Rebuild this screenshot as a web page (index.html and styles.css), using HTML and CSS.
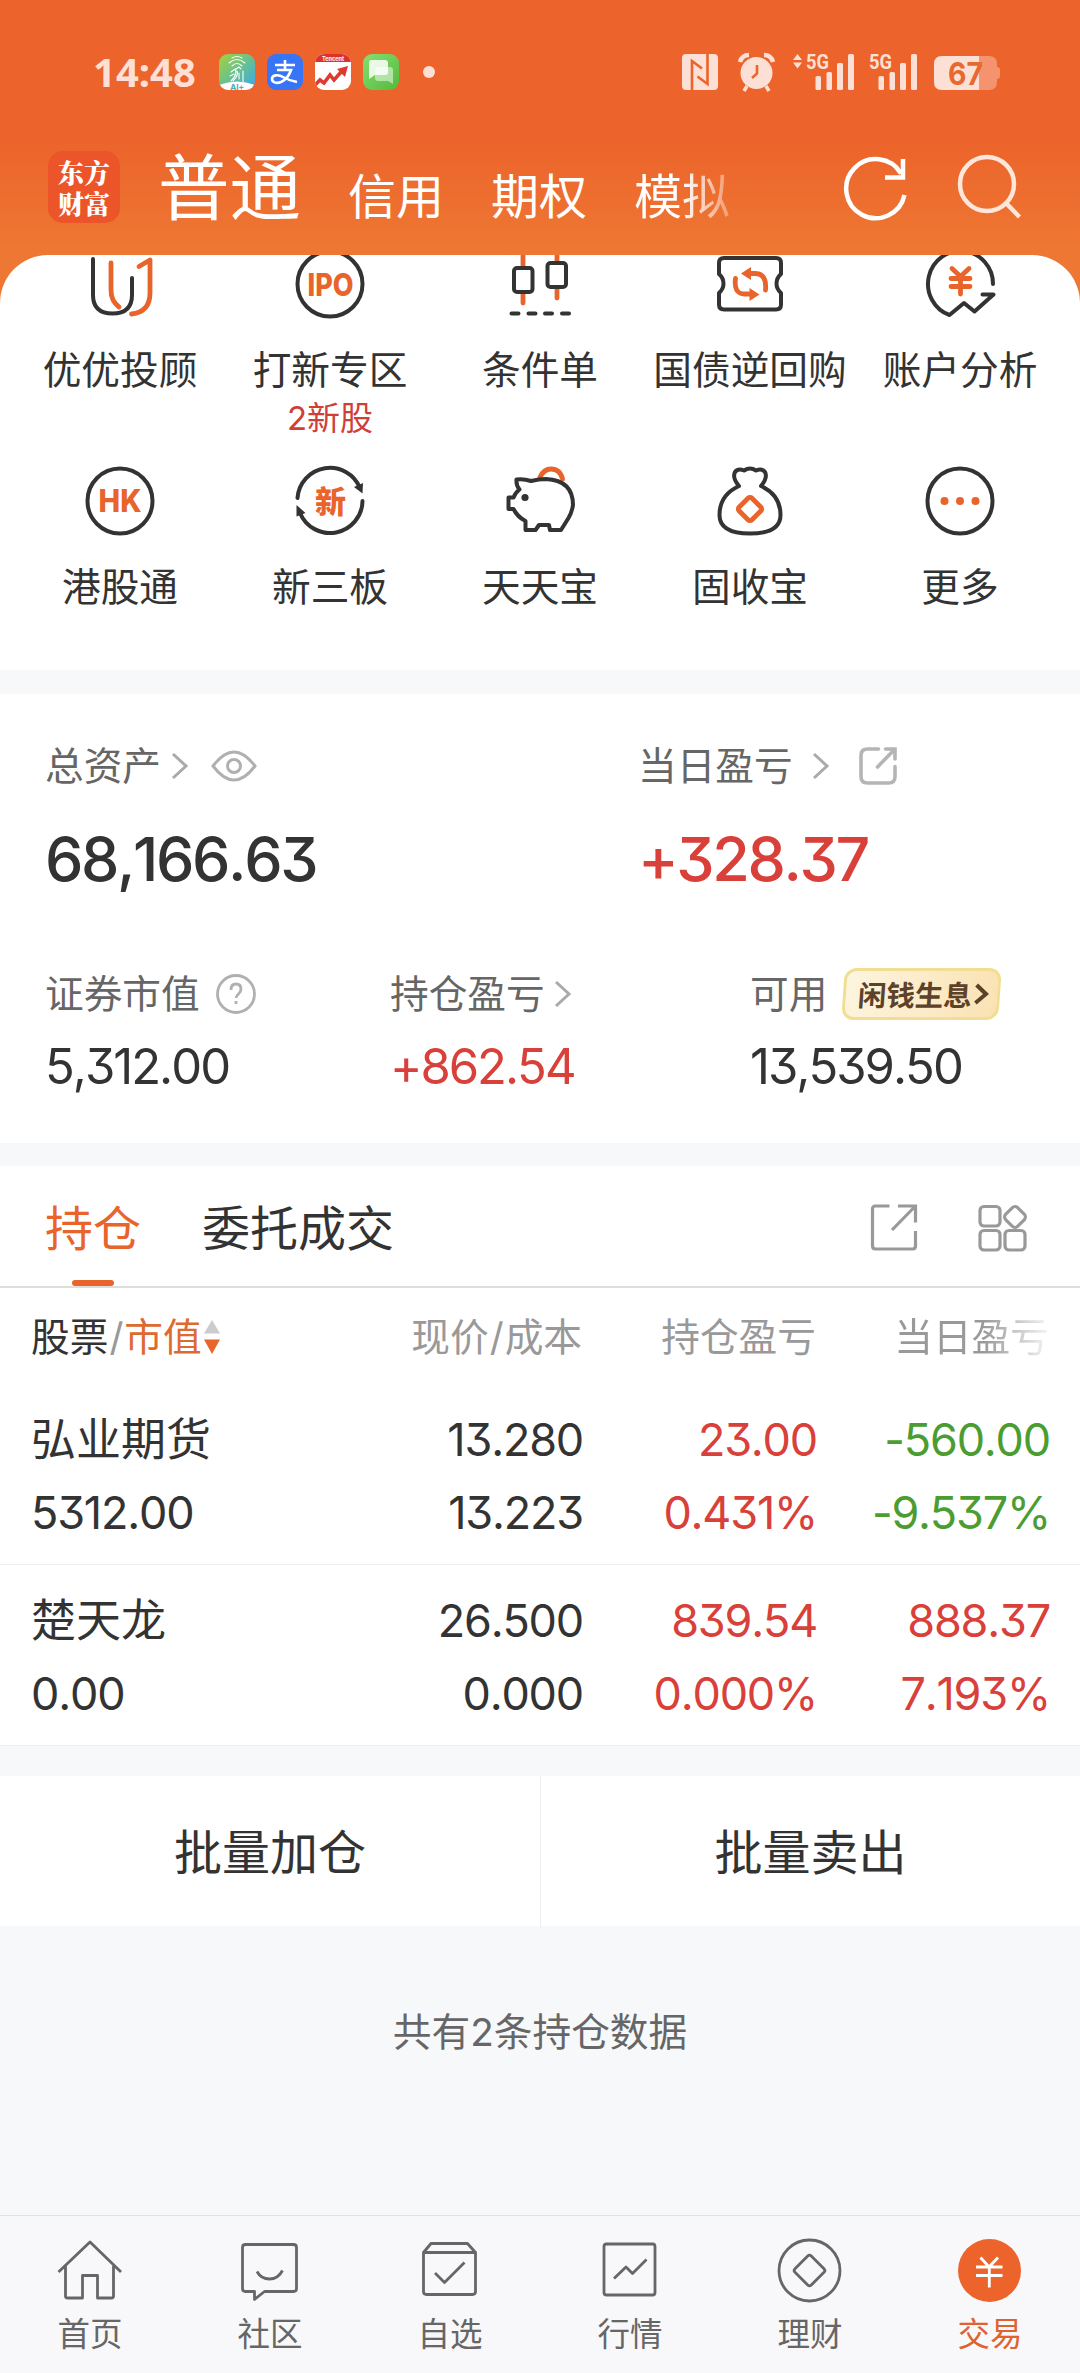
FILE: index.html
```html
<!DOCTYPE html>
<html lang="zh-CN">
<head>
<meta charset="utf-8">
<title>交易</title>
<link rel="stylesheet" href="styles.css">
</head>
<body>
<div class="screen">
  <header class="top">
    <div class="status">
      <span class="clock">14:48</span>
      <svg class="apps" width="240" height="48" viewBox="213 48 240 48">
        <defs>
          <linearGradient id="ga" x1="0" y1="0" x2="1" y2="1"><stop offset="0" stop-color="#a8d13a"/><stop offset=".5" stop-color="#66c191"/><stop offset="1" stop-color="#3fa5ef"/></linearGradient>
          <linearGradient id="gb" x1="0" y1="0" x2="1" y2="1"><stop offset="0" stop-color="#86e070"/><stop offset="1" stop-color="#55b83c"/></linearGradient>
          <clipPath id="ca"><rect x="219" y="54" width="36" height="36" rx="9"/></clipPath>
          <clipPath id="cc"><rect x="315" y="54" width="36" height="36" rx="9"/></clipPath>
        </defs>
        <g clip-path="url(#ca)">
          <rect x="219" y="54" width="36" height="36" fill="url(#ga)"/>
          <path d="M219 85q18-7 36 0v6h-36z" fill="#fff"/>
          <g fill="none" stroke="#fff" stroke-width="1.1" stroke-linecap="round"><path d="M232 58q5-3 10 0M229 63q8-7 16 0M232 66q5-5 10 0M236 69l3-2 2 2M231 72l4-3q3 5-4 12M237 71q2 4-4 10M239 73v6M243 71v11M230 76l4-2"/></g>
          <text x="237" y="90" class="tiny-ai">AI+</text>
        </g>
        <rect x="267" y="54" width="36" height="36" rx="9" fill="#3874f6"/>
        <path d="M275 65h20M285 60v10M277 70h14q-3 9-10 12c-5 2-9 0-9-3 0-4 6-5 11-2q7 4 14 5" fill="none" stroke="#fff" stroke-width="2.6"/>
        <g clip-path="url(#cc)">
          <rect x="315" y="54" width="36" height="36" fill="#fff"/>
          <rect x="315" y="54" width="36" height="8" fill="#e03128"/>
          <text x="333" y="60.500" class="tiny-t">Tencent</text>
          <path d="M314 86l6-6 4 3 6-8 4 5 8-9" fill="none" stroke="#de3a2f" stroke-width="3.600"/>
          <path d="M337 69l11-3-3 11z" fill="#de3a2f"/>
        </g>
        <rect x="363" y="54" width="36" height="36" rx="9" fill="url(#gb)"/>
        <path d="M376 67h14q3 0 3 3v14l-5-3h-10q-3 0-3-3v-8z" fill="#fff" opacity=".5"/>
        <path d="M371 60h14q3 0 3 3v9q0 3-3 3h-10l-6 4v-16q0-3 2-3z" fill="#fff" opacity=".85"/>
        <circle cx="429" cy="72" r="6" fill="#fde0d5"/>
      </svg>
      <svg class="signals" width="330" height="48" viewBox="676 48 330 48" fill="#fde0d5">
        <rect x="682" y="54" width="36" height="36" rx="4"/>
        <path d="M692 90V61l10 7.500M707.500 54v30l-10-7.500" fill="none" stroke="#ec632b" stroke-width="2.600"/>
        <circle cx="756.500" cy="73" r="16"/>
        <path d="M740 62q2-7 9-7M773 62q-2-7-9-7" fill="none" stroke="#fde0d5" stroke-width="4.500"/>
        <path d="M747 86l-3 5M766 86l3 5" stroke="#fde0d5" stroke-width="3.500"/>
        <path d="M757 65v8.500l-5 4.500" fill="none" stroke="#ec632b" stroke-width="2.600"/>
        <path d="M793 60l4.500-6 4.500 6zM793 62.500h9l-4.500 6z"/>
        <text x="806" y="69" class="net" textLength="23" lengthAdjust="spacingAndGlyphs">5G</text>
        <rect x="815.500" y="76" width="5.500" height="14" rx="1.500"/><rect x="826.500" y="72" width="5.500" height="18" rx="1.500"/><rect x="837" y="63" width="6" height="27" rx="1.500"/><rect x="848" y="54" width="6" height="36" rx="1.500"/>
        <text x="869" y="69" class="net" textLength="23" lengthAdjust="spacingAndGlyphs">5G</text>
        <rect x="878.500" y="76" width="5.500" height="14" rx="1.500"/><rect x="889.500" y="72" width="5.500" height="18" rx="1.500"/><rect x="900" y="63" width="6" height="27" rx="1.500"/><rect x="911" y="54" width="6" height="36" rx="1.500"/>
        <path d="M979 56h10q8 0 8 8v3q3 0 3 3v6q0 3-3 3v3q0 8-8 8h-10z" fill="#f4936e"/>
        <path d="M979 56h-37q-8 0-8 8v18q0 8 8 8h37z"/>
        <text x="948" y="84.500" class="batt" textLength="35" lengthAdjust="spacingAndGlyphs">67</text>
      </svg>
    </div>
    <div class="titlebar">
      <div class="logo"><span>东方</span><span>财富</span></div>
      <nav class="modes">
        <span class="mode on">普通</span><span class="mode">信用</span><span class="mode">期权</span><span class="mode fade">模拟</span>
      </nav>
      <svg class="head-icons" width="186" height="72" viewBox="840 151 186 72" fill="none" stroke="#fff">
        <path d="M904.500 195A29.500 29.500 0 1 1 901 173.500" stroke-width="4.500"/>
        <path d="M903 159v18.500h-18" stroke-width="4.500"/>
        <g stroke="#fee6da" stroke-width="4.500"><circle cx="987" cy="184" r="27"/><path d="M1006 203l13.500 14"/></g>
      </svg>
    </div>
  </header>

  <main>
    <section class="shortcuts">
      <div class="cell">
        <svg width="72" height="72" viewBox="84 248 72 72" class="ic"><path d="M93 259v36q0 18.500 19.500 18.500T132 295v-17"/><path class="o" d="M111 263v27q0 11 8 17M139 266.500l11-6.500v33q0 19-18.500 21"/></svg>
        <span>优优投顾</span>
      </div>
      <div class="cell">
        <svg width="72" height="72" viewBox="294 248 72 72" class="ic"><circle cx="330" cy="284" r="32.500"/><text class="badge-t" x="307.500" y="295.500" textLength="46" lengthAdjust="spacingAndGlyphs">IPO</text></svg>
        <span>打新专区</span><small>2新股</small>
      </div>
      <div class="cell">
        <svg width="72" height="72" viewBox="504 248 72 72" class="ic"><path class="o" d="M523 256v11M523 294v9M557 252v10M557 289v9"/><rect x="514" y="268" width="18.500" height="24" rx="3"/><rect x="547.500" y="263" width="18.500" height="24" rx="3"/><path d="M511.500 313.500h7M528.500 313.500h7M545 313.500h7M562 313.500h7"/></svg>
        <span>条件单</span>
      </div>
      <div class="cell">
        <svg width="72" height="72" viewBox="714 248 72 72" class="ic"><path d="M724 258h52q5 0 5 5v11q-4.500 4-4.500 9.500t4.500 9.500v11.500q0 5-5 5h-52q-5 0-5-5V293q4.500-4 4.500-9.500T719 274v-11q0-5 5-5z"/><g class="o"><path d="M749 273.500h6q12 0 10.500 16.500M735.500 278.500q-2 15.500 9 15.500h6"/></g><path class="of" d="M741 273.500l10-6.500v13zM759.500 294.500l-10-6.500v13z"/></svg>
        <span>国债逆回购</span>
      </div>
      <div class="cell">
        <svg width="72" height="72" viewBox="924 248 72 72" class="ic"><path d="M993 284A32.500 33 0 1 0 949.500 315l14.500-12 10.500 8.500 19-17h-11"/><path class="o" d="M952 268.500l8.500 8 8.500-8M951 278.500h19M951 286.500h19M960.500 277v17"/></svg>
        <span>账户分析</span>
      </div>
      <div class="cell">
        <svg width="72" height="72" viewBox="84 465 72 72" class="ic"><circle cx="120" cy="501" r="32.500"/><text class="badge-t" x="98.500" y="512" textLength="43" lengthAdjust="spacingAndGlyphs">HK</text></svg>
        <span>港股通</span>
      </div>
      <div class="cell">
        <svg width="72" height="72" viewBox="294 465 72 72" class="ic"><path d="M297.500 498A32.500 32.500 0 0 1 360 488M362.500 501A32.500 32.500 0 0 1 300 513"/><path class="kf" d="M354 487l9-4-.5 10.500zM296.500 505l9 8-9 3.500z"/><text class="xin" x="315" y="512.500">新</text></svg>
        <span>新三板</span>
      </div>
      <div class="cell">
        <svg width="72" height="72" viewBox="504 465 72 72" class="ic"><path class="o" d="M540 477q4-8 11-8 9 0 11.500 10"/><path d="M516.500 479.500q7-1 14.500 1.500 8-2 15-2 27 1.500 27 26-1 7-4.500 13l-7.500 12h-11l-1-5h-10l-3.500 5h-10v-9q-8-4-12-12h-5v-11.500h5q1.500-4.500 6-8-3.500-4-3-10z"/><circle class="kf" cx="525" cy="497.500" r="3.600"/></svg>
        <span>天天宝</span>
      </div>
      <div class="cell">
        <svg width="72" height="72" viewBox="714 465 72 72" class="ic"><path d="M739 486q-7-8-4-14 3-4 9-1.500 6-4 12 0 6-2.500 9 1.500 3 6-4 14 19.500 9 19.500 29 0 18.500-30.500 18.500T719.500 515q0-20 19.500-29z"/><rect class="ob" x="741" y="500" width="18" height="18" rx="2.500" transform="rotate(45 750 509)"/></svg>
        <span>固收宝</span>
      </div>
      <div class="cell">
        <svg width="72" height="72" viewBox="924 465 72 72" class="ic"><circle cx="960" cy="501" r="32.500"/><g class="of"><circle cx="944.500" cy="501" r="4"/><circle cx="960" cy="501" r="4"/><circle cx="975.500" cy="501" r="4"/></g></svg>
        <span>更多</span>
      </div>
    </section>

    <section class="assets">
      <div class="lead">
        <div class="stat">
          <div class="label">总资产<svg class="chev c1" width="20" height="30" viewBox="0 0 20 30"><path d="M3 3l13 12L3 27"/></svg>
            <svg class="eye" width="48" height="36" viewBox="0 0 48 36"><path d="M3 18Q24-10 45 18 24 46 3 18z"/><circle cx="24" cy="18" r="6.500"/></svg></div>
          <div class="big">68,166.63</div>
        </div>
        <div class="stat">
          <div class="label">当日盈亏<svg class="chev c2" width="20" height="30" viewBox="0 0 20 30"><path d="M3 3l13 12L3 27"/></svg>
            <svg class="ext" width="40" height="40" viewBox="858.500 745.500 40 40"><path d="M879 748.500h-11q-6.500 0-6.500 6.500v21q0 6.500 6.500 6.500h21q6.500 0 6.500-6.500v-10M886 748.500h9.500v10M895 749l-17 17.500"/></svg></div>
          <div class="big up">+328.37</div>
        </div>
      </div>
      <div class="minor">
        <div class="stat"><div class="label">证券市值<svg class="help" width="42" height="42" viewBox="0 0 42 42"><circle cx="21" cy="21" r="18.500"/><path d="M16 17q0-6 5-6t5 5q0 3-2.500 5T21 25M21 28v3"/></svg></div><div class="mid">5,312.00</div></div>
        <div class="stat"><div class="label">持仓盈亏<svg class="chev c3" width="20" height="30" viewBox="0 0 20 30"><path d="M3 3l13 12L3 27"/></svg></div><div class="mid up">+862.54</div></div>
        <div class="stat"><div class="label">可用<span class="promo"><b>闲钱生息</b><svg width="16" height="24" viewBox="0 0 16 24"><path d="M2 3l10 9L2 21"/></svg></span></div><div class="mid">13,539.50</div></div>
      </div>
    </section>

    <section class="holdings">
      <div class="tabs">
        <span class="tab on">持仓</span><span class="tab">委托成交</span>
        <svg class="tools" width="160" height="54" viewBox="869 1200 160 54"><path d="M889.500 1206h-14q-3 0-3 3v37q0 3 3 3h37q3 0 3-3v-15M898 1206h17.500v16.500M915 1206.500l-23 23.500"/><rect x="980" y="1206.500" width="20" height="19.500" rx="4"/><rect x="980" y="1230.500" width="20" height="19.500" rx="4"/><rect x="1005" y="1230.500" width="20" height="19.500" rx="4"/><rect x="1006.500" y="1208.500" width="17" height="17" rx="4" transform="rotate(45 1015 1217)"/></svg>
      </div>
      <div class="row thead">
        <div class="first"><em>股票</em><u>/</u><i>市值</i><svg width="18" height="36" viewBox="0 0 18 36"><path d="M1 14.500L9 1l8 13.500z" fill="#ccc"/><path d="M1 20.500h16L9 35z" fill="#e8642b"/></svg></div>
        <div>现价<u>/</u>成本</div><div>持仓盈亏</div><div class="tail">当日盈亏</div>
      </div>
      <div class="row">
        <div class="first"><p class="name">弘业期货</p><p>5312.00</p></div>
        <div><p>13.280</p><p>13.223</p></div>
        <div class="up"><p>23.00</p><p>0.431%</p></div>
        <div class="down"><p>-560.00</p><p>-9.537%</p></div>
      </div>
      <div class="row last">
        <div class="first"><p class="name">楚天龙</p><p>0.00</p></div>
        <div><p>26.500</p><p>0.000</p></div>
        <div class="up"><p>839.54</p><p>0.000%</p></div>
        <div class="up"><p>888.37</p><p>7.193%</p></div>
      </div>
    </section>

    <section class="actions"><span>批量加仓</span><span>批量卖出</span></section>
    <p class="note">共有2条持仓数据</p>
  </main>

  <nav class="bottom">
    <div class="item"><svg width="72" height="72" viewBox="54 2234 72 72"><path d="M58.500 2272l31.500-30 31 30M65.500 2266v30q0 2 2 2h15v-22.500h15V2298h14q2 0 2-2v-30"/></svg><span>首页</span></div>
    <div class="item"><svg width="72" height="72" viewBox="234 2234 72 72"><path d="M245.500 2244.500h48q3 0 3 3v41q0 3-3 3h-29l-10 8v-8h-9q-3 0-3-3v-41q0-3 3-3zM257 2271.500q4 7.500 12.500 7.500t13-8.500"/></svg><span>社区</span></div>
    <div class="item"><svg width="72" height="72" viewBox="414 2234 72 72"><path d="M423.500 2252.500h52v39q0 3-3 3h-46q-3 0-3-3zl7.500-9h36.500l8 9M435 2273l9.500 9.500 20-20"/></svg><span>自选</span></div>
    <div class="item"><svg width="72" height="72" viewBox="594 2234 72 72"><rect x="604" y="2244" width="51" height="51" rx="2.500"/><path d="M614 2278.500l12-11.500 6.500 6.500 14-14"/></svg><span>行情</span></div>
    <div class="item"><svg width="72" height="72" viewBox="774 2234 72 72"><circle cx="809.500" cy="2270.500" r="30.500"/><rect x="798" y="2259" width="23" height="23" rx="2.500" transform="rotate(45 809.500 2270.500)"/></svg><span>理财</span></div>
    <div class="item on"><svg width="72" height="72" viewBox="954 2234 72 72"><circle class="disc" cx="989.500" cy="2270.500" r="31.500"/><path class="yen" d="M980.500 2257.500l8.500 9.500 9-9.500M976 2267h26.500M976 2275.500h26.500M989.300 2267v20.500"/></svg><span>交易</span></div>
  </nav>
</div>
</body>
</html>
```

FILE: styles.css
```css
* { box-sizing: border-box; margin: 0; padding: 0; }
body {
  width: 1080px;
  background: #f7f8fa;
  color: #333;
  font-family: Inter, "Noto Sans CJK SC", sans-serif;
  font-feature-settings: "cv09";
}
svg { display: block; flex: none; }
.screen { display: flex; flex-direction: column; width: 1080px; height: 2373px; overflow: hidden; }

/* header */
.top { height: 305px; flex: none; background: linear-gradient(#ec632b 0, #ec632b 135px, #ee7833 255px); }
.status { display: flex; align-items: center; height: 96px; padding: 48px 74px 0 93px; }
.clock { width: 120px; font: 700 40px/48px "Noto Sans", sans-serif; color: #fde0d5; }
.signals { margin-left: auto; }
.tiny-ai { font: 700 8px Inter, sans-serif; fill: #47a9bd; text-anchor: middle; }
.tiny-t { font: 700 5.5px Inter, sans-serif; fill: #fff; text-anchor: middle; }
.net { font: 700 21px Roboto, sans-serif; }
.batt { font: 700 31px Inter, sans-serif; fill: #e8692f; }
.titlebar { display: flex; align-items: center; height: 145px; padding: 46px 54px 9px 48px; }
.logo {
  display: flex; flex-direction: column; align-items: center; justify-content: center;
  width: 72px; height: 72px; border-radius: 15px; background: #ec5429;
}
.logo span { color: #fff; font: 900 26px/31px "Noto Serif CJK SC", "Noto Sans CJK SC", serif; }
.modes { display: flex; align-items: baseline; gap: 47px; margin: 11px 0 0 38px; color: #fff; line-height: 72px; }
.mode { font-size: 48px; }
.mode.on { font-size: 71.5px; }
.mode.fade {
  background: linear-gradient(90deg, #fff 50%, rgba(255, 255, 255, .3));
  -webkit-background-clip: text; background-clip: text; color: transparent;
}
.head-icons { margin-left: auto; }

/* shortcuts */
main { flex: 1; margin-top: -50px; }
.shortcuts {
  display: grid; grid-template-columns: repeat(5, 210px); grid-template-rows: 217px 198px;
  height: 415px; padding: 0 15px; overflow: hidden;
  background: #fff; border-radius: 48px 48px 0 0;
}
.cell { display: flex; flex-direction: column; align-items: center; margin-top: -7px; font-size: 38.7px; line-height: 50px; }
.cell span { margin-top: 25px; }
.cell small { font-size: 33px; line-height: 46px; color: #cf3f38; }
.ic { fill: none; stroke: #333; stroke-width: 4; stroke-linecap: round; stroke-linejoin: round; }
.ic .o, .ic .ob { stroke: #e8642b; stroke-width: 4.8; }
.ic .of { fill: #e8642b; stroke: none; }
.ic .kf { fill: #333; stroke: none; }
.ic text { fill: #e8642b; stroke: none; }
.ic .badge-t { font: 800 31px Inter, sans-serif; }
.ic .xin { font: 900 31px "Noto Sans CJK SC", sans-serif; }

/* assets */
.assets { height: 449px; margin-top: 24px; padding: 47px 45px 0; background: #fff; }
.lead { display: grid; grid-template-columns: 593px 1fr; }
.minor { display: grid; grid-template-columns: 345px 360px 1fr; margin-top: 74px; }
.label { display: flex; align-items: center; height: 50px; font-size: 38.7px; line-height: 50px; color: #666; }
.chev { fill: none; stroke: #aaa; stroke-width: 3; }
.c1 { margin-left: 9px; }
.c2 { margin-left: 18px; }
.c3 { margin-left: 8px; }
.eye { margin-left: 20px; fill: none; stroke: #b0b0b0; stroke-width: 3; }
.ext { margin-left: 27px; fill: none; stroke: #b5b5b5; stroke-width: 3.6; stroke-linecap: round; }
.help { margin-left: 15px; fill: none; stroke: #b0b0b0; stroke-width: 2.8; }
.big, .mid, .row p { font-kerning: none; }
.big { height: 72px; margin-top: 32px; font-size: 61px; line-height: 72px; font-weight: 500; letter-spacing: -2.4px; }
.mid { height: 60px; margin-top: 18px; font-size: 49px; line-height: 60px; letter-spacing: -2px; }
.up { color: #d9403a; }
.down { color: #4b9d32; }
.promo {
  display: flex; align-items: center; width: 157px; height: 52px; margin-left: 16px; padding-left: 12px;
  border: 3px solid #f3dd93; border-radius: 12px; transform: skewX(-4deg);
  background: linear-gradient(100deg, #fdf5df, #fae2b3); color: #5d4128;
}
.promo b { font: 700 28.5px/46px "Noto Sans CJK SC", sans-serif; }
.promo svg { fill: none; stroke: #5d4128; stroke-width: 4; margin-left: 2px; }

/* holdings */
.holdings { margin-top: 23px; background: #fff; }
.tabs { display: flex; align-items: center; height: 122px; padding: 0 51px 0 45px; border-bottom: 2px solid #ddd; }
.tab { position: relative; height: 120px; font-size: 48px; line-height: 125px; margin-right: 61px; }
.tab.on { color: #e8642b; }
.tab.on::after { content: ""; position: absolute; left: 27px; bottom: 0; width: 42px; height: 6px; border-radius: 3px; background: #e8642b; }
.tools { margin-left: auto; margin-top: 1px; fill: none; stroke: #999; stroke-width: 3.2; }
.row {
  display: grid; grid-template-columns: 300px 251px 234px 233px;
  height: 181px; padding: 19px 31px 0; border-bottom: 1px solid #eee;
  font-size: 45px; line-height: 73px; text-align: right;
}
.row .first { text-align: left; }
.row p { letter-spacing: -1.2px; margin-right: -1px; }
.row .name { letter-spacing: 0; }
.thead { height: 96px; padding-top: 24px; border: 0; font-size: 38.7px; line-height: 50px; color: #999; align-items: start; }
.thead .first { display: flex; align-items: center; height: 50px; }
.thead em { font-style: normal; color: #333; }
.thead i { font-style: normal; color: #dd6a30; }
.thead u { text-decoration: none; padding: 0 1px; }
.thead svg { margin-left: 1px; }
.tail {
  background: linear-gradient(90deg, #999 72%, rgba(153, 153, 153, .1));
  -webkit-background-clip: text; background-clip: text; color: transparent;
}

/* footer parts */
.actions { display: grid; grid-template-columns: 540px 540px; height: 150px; margin-top: 30px; background: #fff; font-size: 48px; line-height: 153px; text-align: center; }
.actions span + span { border-left: 1px solid #eee; }
.note { margin-top: 81px; font-size: 38.7px; line-height: 50px; text-align: center; color: #666; }
.bottom { display: grid; grid-template-columns: repeat(6, 180px); flex: none; height: 158px; border-top: 1px solid #e1e2e4; background: #f8f8fa; }
.item { display: flex; flex-direction: column; align-items: center; padding-top: 18px; font-size: 32.5px; line-height: 50px; color: #666; }
.item span { margin-top: 4px; }
.item svg { fill: none; stroke: #666; stroke-width: 2.8; stroke-linejoin: round; }
.item.on { color: #dd642f; }
.item .disc { fill: #ec632b; stroke: none; }
.item .yen { stroke: #fff; }
```
